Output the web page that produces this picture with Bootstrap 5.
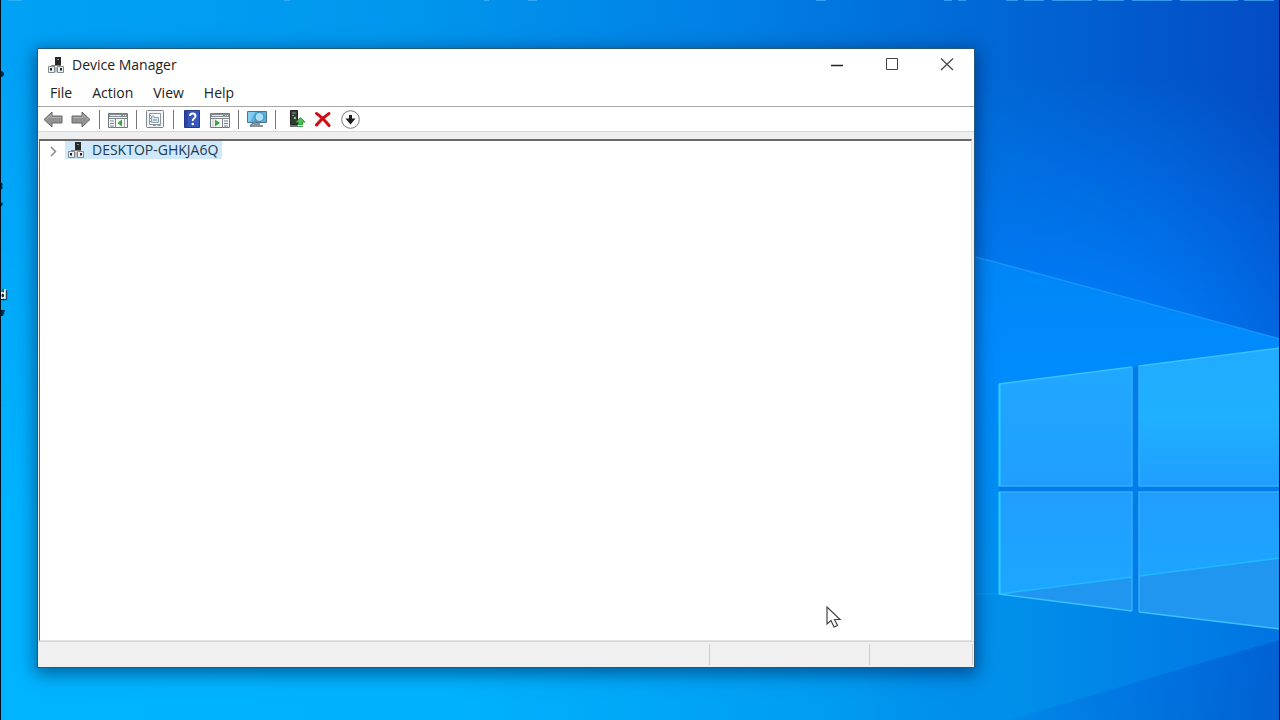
<!DOCTYPE html>
<html lang="en">
<head>
<meta charset="utf-8">
<meta name="viewport" content="width=device-width, initial-scale=1">
<title>Device Manager</title>
<link rel="stylesheet" href="https://cdn.jsdelivr.net/npm/bootstrap@5.3.0/dist/css/bootstrap.min.css">
<style>
body { font-family: "Open Sans", "Noto Sans", sans-serif; font-size: 14px; line-height: 18px; color: #222; background: #0078d7; }
.desktop { padding: 48px 305px 52px 37px; }
.wallpaper { inset: 0; width: 100%; height: 100%; }
.screen-edge { inset: 0; border: solid #02101f; border-width: 0 1px; pointer-events: none; }
.win { border: 1px solid #24587f; box-shadow: 0 4px 16px 2px rgba(0, 20, 60, .5); background: #fff; }
.win button { border: 0; background: none; padding: 0; color: inherit; }
.titlebar { height: 31px; padding-left: 9px; }
.titlebar h1 { font-size: 14px; line-height: 18px; font-weight: 400; margin: 0 0 0 7px; }
.caption-btn { width: 55px; height: 31px; }
.caption-btn svg { display: block; margin: 0 auto; }
.menubar { height: 26px; padding-left: 2px; }
.win .menubar button { padding: 0 10px; }
.toolbar { height: 26px; border-top: 1px solid #a8a8a8; border-bottom: 1px solid #d8d8d8; padding-left: 1px; }
.tool-btn { width: 28px; height: 24px; }
.tool-sep { width: 1px; height: 19px; margin: 0 4px; background: #777; }
.pane-wrap { background: #efefef; padding: 7px 2px 0 1px; }
.pane { border: 1px solid #e2e2e2; border-top: 2px solid #696969; border-left: 1px solid #696969; background: #fff; }
.win .twisty { width: 25px; height: 20px; }
.node { background: #cfe8fb; height: 18px; padding: 0 4px 0 2px; gap: 7px; color: #1c3a52; }
.statusbar { height: 26px; background: #f0f0f0; border-top: 1px solid #d5d5d5; padding: 2px 1px 2px 0; }
.status-cell { border-right: 1px solid #cfcfcf; }
.cell-mid { width: 160px; }
.cell-end { width: 103px; }
.pointer { left: 64.5%; top: 606px; }
.shortcut { left: -1px; top: 287px; font-size: 12px; line-height: 16px; font-weight: 700; color: #fff; text-shadow: 1px 1px 1px #000, -1px 0 1px #000; }
</style>
</head>
<body>
<main class="desktop position-relative d-flex min-vh-100 overflow-hidden">
  <svg class="wallpaper position-absolute" viewBox="0 0 1280 720" preserveAspectRatio="none" aria-hidden="true">
    <defs>
      <linearGradient id="sky"><stop offset="0" stop-color="#00a2f6"/><stop offset=".3" stop-color="#0098ee"/><stop offset=".55" stop-color="#0082e6"/><stop offset=".78" stop-color="#0067d4"/><stop offset="1" stop-color="#044cc4"/></linearGradient>
      <linearGradient id="floor"><stop offset="0" stop-color="#00b4ff"/><stop offset=".35" stop-color="#00b2fe"/><stop offset=".65" stop-color="#009cf2"/><stop offset=".8" stop-color="#0088e8"/><stop offset="1" stop-color="#0060d2"/></linearGradient>
      <linearGradient id="fadeDown" x1="0" y1="0" x2="0" y2="1"><stop offset=".1" stop-color="#000"/><stop offset=".75" stop-color="#fff"/></linearGradient>
      <mask id="lower"><rect width="1280" height="720" fill="url(#fadeDown)"/></mask>
      <radialGradient id="glow" gradientUnits="userSpaceOnUse" cx="1080" cy="400" r="340"><stop offset="0" stop-color="#0088ff" stop-opacity=".95"/><stop offset=".4" stop-color="#007af8" stop-opacity=".75"/><stop offset="1" stop-color="#006cec" stop-opacity="0"/></radialGradient>
      <linearGradient id="beam" gradientUnits="userSpaceOnUse" x1="0" y1="257" x2="0" y2="594"><stop offset="0" stop-color="#0086f6"/><stop offset=".3" stop-color="#008bfd"/><stop offset="1" stop-color="#0090ee"/></linearGradient>
      <linearGradient id="lowbeam" gradientUnits="userSpaceOnUse" x1="860" y1="0" x2="1280" y2="0"><stop offset="0" stop-color="#0092ec" stop-opacity="0"/><stop offset=".35" stop-color="#0090ea"/><stop offset="1" stop-color="#0074e2"/></linearGradient>
      <linearGradient id="glass" x1="0" y1="0" x2="0" y2="1"><stop offset="0" stop-color="#20a8ff"/><stop offset="1" stop-color="#209eff"/></linearGradient>
      <linearGradient id="glassR" x1="0" y1="0" x2="0" y2="1"><stop offset="0" stop-color="#21abff"/><stop offset=".5" stop-color="#1fb0ff"/><stop offset="1" stop-color="#209eff"/></linearGradient>
      <linearGradient id="glassB" x1="0" y1="0" x2="0" y2="1"><stop offset="0" stop-color="#209eff"/><stop offset="1" stop-color="#1ca8ff"/></linearGradient>
    </defs>
    <rect width="1280" height="720" fill="url(#sky)"/>
    <rect width="1280" height="720" fill="url(#floor)" mask="url(#lower)"/>
    <rect width="1280" height="720" fill="url(#glow)"/>
    <path d="M940 247L976 257L1280 339V594H940Z" fill="url(#beam)"/>
    <path d="M860 594H1280V640Q1160 675 1010 720H860Z" fill="url(#lowbeam)"/>
    <path d="M976 257L1280 339" stroke="#1ea0ff" stroke-width="1.5" opacity=".7" fill="none"/>
    <path d="M976 594H999" stroke="#10a4ff" opacity=".6"/>
    <path d="M999 384L1280 348V629L999 594Z" fill="#007de8"/>
    <path d="M999 384L1132 367V486H999Z" fill="url(#glass)"/>
    <path d="M1139 366L1280 348V486H1139Z" fill="url(#glassR)"/>
    <path d="M999 492H1132V611L999 594Z" fill="url(#glassB)"/>
    <path d="M1139 492H1280V629L1139 612Z" fill="url(#glassB)"/>
    <path d="M999 594L1132 577V611ZM1139 576L1280 558V629L1139 612Z" fill="#2196f0"/>
    <path d="M999 594L1132 577M1139 576L1280 558" stroke="#22b8ff" stroke-width="1.500" fill="none"/>
    <path d="M999 384L1132 367M1139 366L1280 348M999 594L1132 611M1139 612L1280 629" stroke="#3cc0ff" stroke-width="1.500" fill="none"/>
    <path d="M1132 367V486H999M1139 486V366M1139 486H1280M999 492H1132V611M1280 492H1139V612" stroke="#36acff" stroke-width="1.500" fill="none"/>
    <path d="M999.500 384V486M999.500 492V594" stroke="#2ed0ff" stroke-width="2" fill="none"/>
    <path d="M8 0h14M284 0h6M484 0h5M528 0h9M816 0h10M944 0h8M958 0h8M1006 0h12M1024 0h20M1052 0h40M1098 0h26M1132 0h40M1180 0h58M1244 0h30" stroke="#48b4ff" stroke-width="2" opacity=".7"/>
    <path d="M0 71q4 0 4 3t-4 3zM0 182q4 1 2 4q2 3-2 4zM0 202l3 1-1 3H0zM0 310l5 0-2 6H0z" fill="#052a45"/>
  </svg>
  <span class="shortcut position-absolute">d</span>
  <section class="win position-relative d-flex flex-column flex-grow-1" aria-label="Device Manager">
    <header class="titlebar d-flex align-items-center">
      <svg width="18" height="18" viewBox="0 0 18 18" aria-hidden="true"><use href="#pc"/></svg>
      <h1 class="flex-grow-1">Device Manager</h1>
      <button class="caption-btn" aria-label="Minimize"><svg width="14" height="14" viewBox="0 0 14 14"><path d="M1 7.500H13" stroke="#222" stroke-width="1.500"/></svg></button>
      <button class="caption-btn" aria-label="Maximize"><svg width="14" height="14" viewBox="0 0 14 14"><path d="M1.500 .5H12.500V11.500H1.500Z" fill="none" stroke="#444"/></svg></button>
      <button class="caption-btn" aria-label="Close"><svg width="14" height="14" viewBox="0 0 14 14"><path d="M1 .5L13 12M13 .5L1 12" stroke="#444" stroke-width="1.200"/></svg></button>
    </header>
    <nav class="menubar d-flex align-items-center" aria-label="Menu">
      <button>File</button><button>Action</button><button>View</button><button>Help</button>
    </nav>
    <div class="toolbar d-flex align-items-center" role="toolbar" aria-label="Tools">
      <button class="tool-btn d-flex align-items-center justify-content-center" aria-label="Back"><svg width="20" height="18" viewBox="0 0 20 18"><path d="M1 9.500L9 2V6H19V13H9V17Z" fill="#929292" stroke="#666" stroke-linejoin="round"/><path d="M3 9.500L8 5V7.500H18" fill="none" stroke="#b0b0b0"/></svg></button>
      <button class="tool-btn d-flex align-items-center justify-content-center" aria-label="Forward"><svg width="20" height="18" viewBox="0 0 20 18"><path d="M19 9.500L11 2V6H1V13H11V17Z" fill="#929292" stroke="#666" stroke-linejoin="round"/><path d="M17 9.500L12 5V7.500H2" fill="none" stroke="#b0b0b0"/></svg></button>
      <span class="tool-sep"></span>
      <button class="tool-btn d-flex align-items-center justify-content-center" aria-label="Show console tree"><svg width="20" height="18" viewBox="0 0 20 18"><path d="M.5 3.500H19.500V17.500H.5Z" fill="#f6f7f7" stroke="#737b82"/><path d="M1 4H19V7H1Z" fill="#858c92"/><path d="M2 5.500H13M15 5.500H16M17 5.500H18" stroke="#e4e8ea"/><path d="M1 8.500H19M7.500 9V17" stroke="#7d858b"/><path d="M2 11H6M2 13.500H6M2 16H6" stroke="#6a8fb0"/><path d="M14 9.500V16.500L9.500 13Z" fill="#39a935"/><path d="M16.500 9V17" stroke="#a6adb2"/></svg></button>
      <span class="tool-sep"></span>
      <button class="tool-btn d-flex align-items-center justify-content-center" aria-label="Properties"><svg width="20" height="18" viewBox="0 0 20 18"><rect x="1.500" y=".5" width="17" height="17" rx="1" fill="#f1f3f4" stroke="#7e868c"/><path d="M4.500 3.500H15.500V14.500H4.500Z" fill="#fff" stroke="#8b969e"/><path d="M6.500 6H9V7.500H13.500V12.500H6.500Z" fill="#d5e6f0" stroke="#8fa4b2"/><path d="M4 5.500H6M4 8.500H6M4 11.500H6M8 10H12" stroke="#80919d"/><path d="M8 15.500H11M12.500 15.500H15.500" stroke="#58a9c4"/></svg></button>
      <span class="tool-sep"></span>
      <button class="tool-btn d-flex align-items-center justify-content-center" aria-label="Help topics"><svg width="18" height="18" viewBox="0 0 18 18"><path d="M1.500 .5H16.500V17.500H1.500Z" fill="#3557bd" stroke="#233b8c"/><path d="M2 1H4.500V17H2Z" fill="#2a439c"/><path d="M7 6Q7 3.500 9.700 3.500T12.500 6Q12.500 7.500 11 8.500T9.800 11" stroke="#fff" stroke-width="2" fill="none"/><circle cx="9.800" cy="14" r="1.300" fill="#fff"/></svg></button>
      <button class="tool-btn d-flex align-items-center justify-content-center" aria-label="Show action pane"><svg width="20" height="18" viewBox="0 0 20 18"><path d="M.5 3.500H19.500V17.500H.5Z" fill="#f6f7f7" stroke="#737b82"/><path d="M1 4H19V7H1Z" fill="#858c92"/><path d="M2 5.500H13M15 5.500H16M17 5.500H18" stroke="#e4e8ea"/><path d="M1 8.500H19M12.500 9V17" stroke="#7d858b"/><path d="M14 11H18M14 13.500H18M14 16H18" stroke="#6a7f90"/><path d="M5 9.500V16.500L10 13Z" fill="#39a935"/><path d="M3 9V17" stroke="#c0c5c8"/></svg></button>
      <span class="tool-sep"></span>
      <button class="tool-btn d-flex align-items-center justify-content-center" aria-label="Scan for hardware changes"><svg width="20" height="18" viewBox="0 0 20 18"><path d="M.5 1.500H19.500V12.500H.5Z" fill="#55b3e2" stroke="#4a7591"/><path d="M1 2H8L3 12H1Z" fill="#85cdef"/><path d="M7 13H13V15H16V17H4V15H7Z" fill="#8b9499"/><path d="M10 10L3 16.500" stroke="#6f8795" stroke-width="2"/><circle cx="12.500" cy="7" r="4.500" fill="#a9def5" stroke="#3d83ab"/></svg></button>
      <span class="tool-sep"></span>
      <button class="tool-btn d-flex align-items-center justify-content-end" aria-label="Update driver"><svg width="24" height="18" viewBox="0 0 24 18"><path d="M6.500 .5H13.500V14.500H6.500Z" fill="#343a38" stroke="#202322"/><path d="M8 3H12M8 5.500H10" stroke="#87928e"/><circle cx="11" cy="8" r="1.200" fill="#6dde61"/><path d="M6 15H14V17H6Z" fill="#6e7472"/><path d="M16.500 7.500L21 12H18.500V14.500H14.500V12H12Z" fill="#4fc154" stroke="#31943b"/><path d="M14 16.500H19" stroke="#3da548"/></svg></button>
      <button class="tool-btn d-flex align-items-center justify-content-center" aria-label="Uninstall device"><svg width="18" height="18" viewBox="0 0 18 18"><path d="M3.500 3.500Q9 7 16 15.500M16 3.500Q9 8 3.500 15" stroke="#d00d12" stroke-width="3" fill="none" stroke-linecap="round"/></svg></button>
      <button class="tool-btn d-flex align-items-center justify-content-center" aria-label="Disable device"><svg width="20" height="20" viewBox="0 0 20 20"><circle cx="10.500" cy="10.500" r="8.800" fill="#fdfdfd" stroke="#777"/><path d="M9 6H12V9.500H15.500L10.500 15.500L5.500 9.500H9Z" fill="#1c1c1c"/></svg></button>
    </div>
    <div class="pane-wrap d-flex flex-grow-1">
      <div class="pane flex-grow-1">
        <div class="d-flex align-items-start">
          <button class="twisty" aria-label="Expand"><svg class="d-block mx-auto" width="10" height="12" viewBox="0 0 10 12"><path d="M3 2L7.500 6.500L3 11" fill="none" stroke="#8a8a8a" stroke-width="1.500"/></svg></button>
          <div class="node d-flex align-items-center">
            <svg width="18" height="18" viewBox="0 0 18 18" aria-hidden="true">
              <g id="pc"><path d="M8 1H14V9H8Z" fill="#26282a"/><path d="M10 3H12V4H10Z" fill="#8d9498"/><path d="M4.500 11V9.500H14" stroke="#7c8185" fill="none"/><path d="M1.500 10.500H7.500V16.500H1.500Z" fill="#eceeef" stroke="#84898d"/><path d="M10.500 10.500H16.500V16.500H10.500Z" fill="#eceeef" stroke="#84898d"/><path d="M3 12H5V14.500H3ZM13 12H15V14.500H13Z" fill="#1f2224"/><path d="M8 11H10V16.500H8Z" fill="#b9bdc0"/></g>
            </svg>
            <span>DESKTOP-GHKJA6Q</span>
          </div>
        </div>
      </div>
    </div>
    <footer class="statusbar d-flex">
      <div class="status-cell flex-grow-1"></div><div class="status-cell cell-mid"></div><div class="status-cell cell-end"></div>
    </footer>
  </section>
  <svg class="pointer position-absolute" width="18" height="24" viewBox="0 0 18 24" aria-hidden="true"><path d="M1 1V18L5 14.500L8 21L11.500 19.500L8.500 13.500H14Z" fill="#fff" stroke="#444" stroke-width="1.200"/></svg>
  <div class="screen-edge position-absolute"></div>
</main>
<script src="https://cdn.jsdelivr.net/npm/bootstrap@5.3.0/dist/js/bootstrap.bundle.min.js"></script>
</body>
</html>
